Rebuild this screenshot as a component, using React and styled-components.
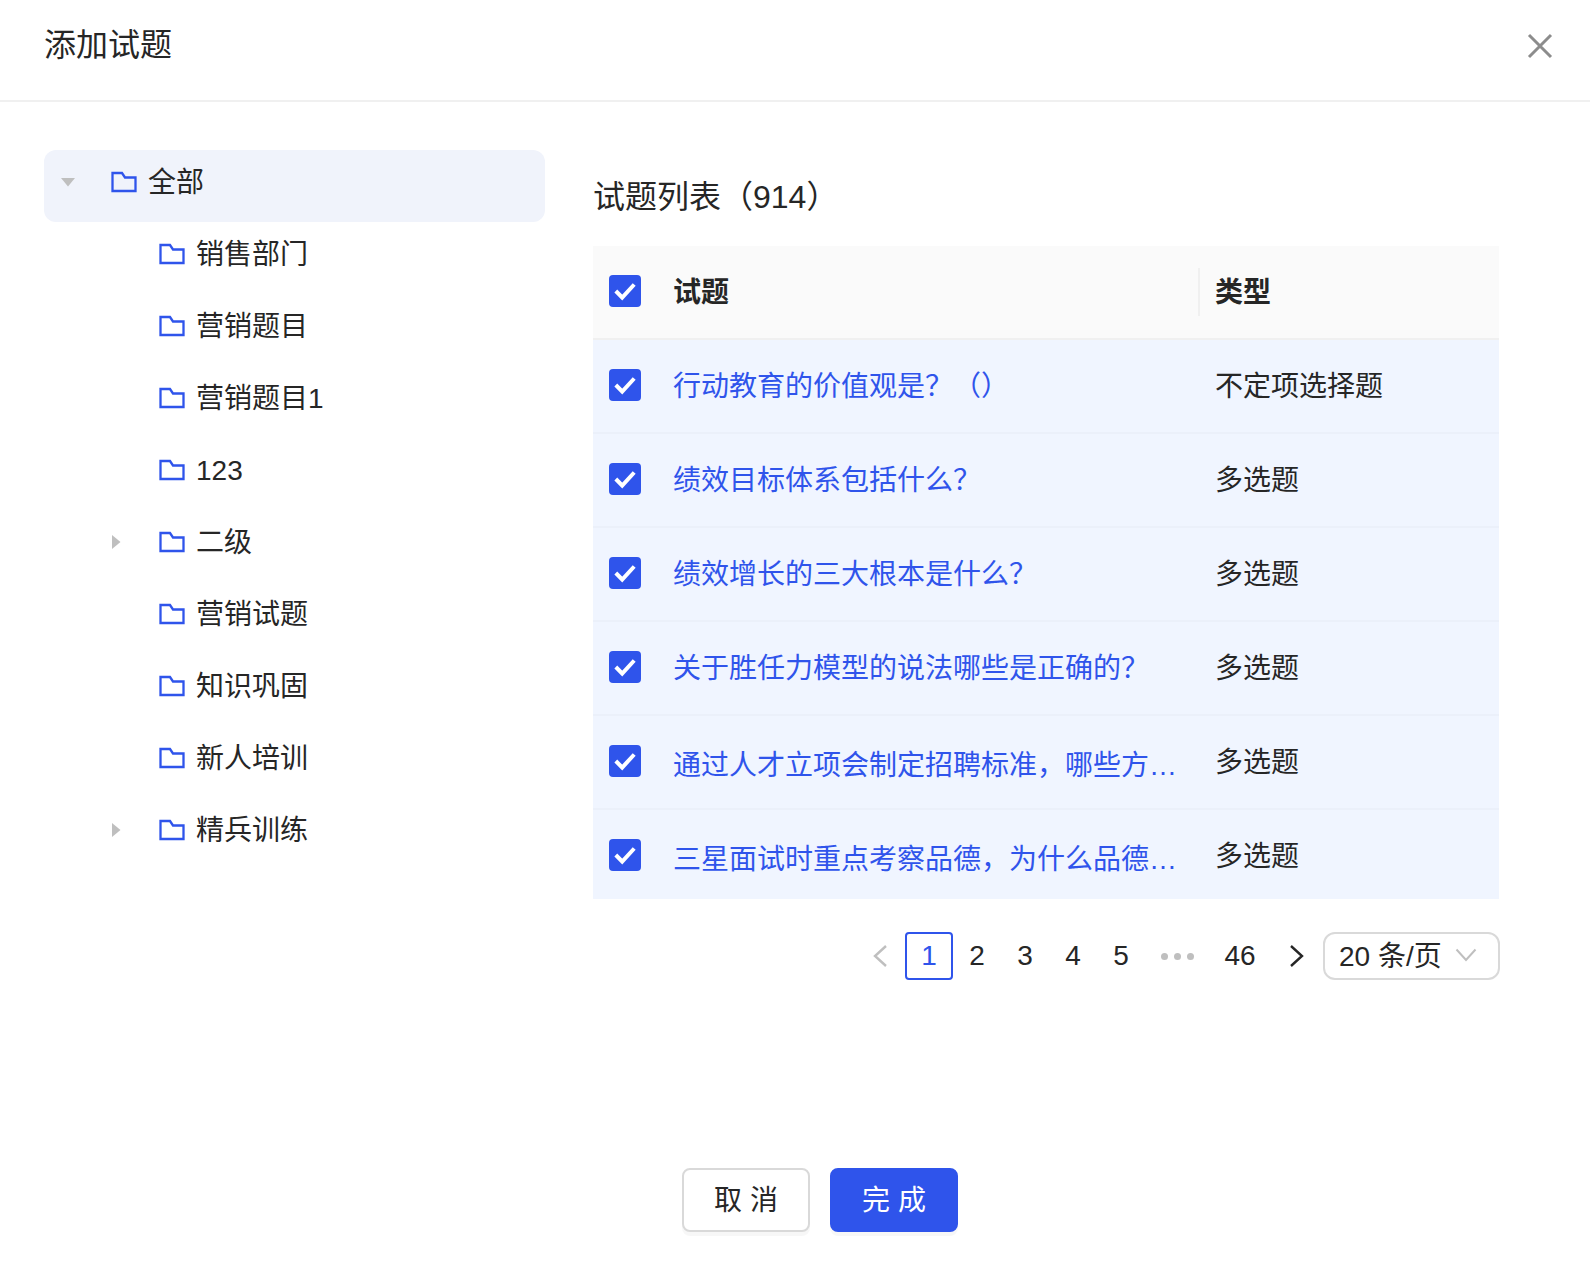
import React from "react";
import styled, { createGlobalStyle } from "styled-components";

const Global = createGlobalStyle`
  html, body { margin: 0; padding: 0; background: #fff; }
  * { box-sizing: border-box; }
  body { font-family: "Liberation Sans", "Noto Sans CJK SC", sans-serif; color: #262626; }
`;

const primary = "#2f54eb";

const Page = styled.div`
  width: 1590px;
  height: 1262px;
  display: flex;
  flex-direction: column;
  overflow: hidden;
  background: #fff;
`;
const Header = styled.header`
  height: 102px;
  flex: none;
  border-bottom: 2px solid #f0f0f0;
  padding: 0 36px 10px 44px;
  display: flex;
  align-items: center;
  justify-content: space-between;
`;
const Title = styled.h1`
  margin: 0;
  font-size: 32px;
  font-weight: 400;
  line-height: 44px;
`;
const Close = styled.button`
  border: 0;
  background: none;
  padding: 0;
  width: 28px;
  height: 28px;
  display: flex;
  color: #8c8c8c;
  margin-top: 2px;
`;
const Body = styled.main`
  flex: 1;
  display: flex;
  gap: 48px;
  padding: 48px 91px 0 44px;
`;
const Tree = styled.ul`
  list-style: none;
  margin: 0;
  padding: 0;
  width: 501px;
  flex: none;
`;
const TreeRow = styled.li`
  height: 72px;
  display: flex;
  align-items: center;
  padding-left: ${p => p.$level * 48}px;
  padding-bottom: 7px;
  border-radius: 12px;
  background: ${p => (p.$selected ? "#f0f3fb" : "transparent")};
  font-size: 28px;
  line-height: 40px;
`;
const Switcher = styled.span`
  width: 48px;
  flex: none;
  display: flex;
  justify-content: center;
  color: #bfbfbf;
  margin-bottom: 2px;
`;
const FolderWrap = styled.span`
  margin-left: 19px;
  margin-right: 11px;
  display: flex;
  color: ${primary};
  margin-bottom: 1px;
`;
const ListColumn = styled.section`
  flex: 1;
  min-width: 0;
`;
const ListTitle = styled.h2`
  margin: 25px 0 27px;
  font-size: 32px;
  font-weight: 400;
  line-height: 44px;
`;
const Table = styled.div`
  height: 653px;
  overflow: hidden;
`;
const Row = styled.div`
  display: grid;
  grid-template-columns: 64px 541px 301px;
  align-items: center;
  height: 94px;
  border-bottom: 2px solid ${p => (p.$head ? "#f0f0f0" : "#ebf0fa")};
  background: ${p => (p.$head ? "#fafafa" : "#f0f5ff")};
  font-size: 28px;
  line-height: 40px;
`;
const CheckCell = styled.div`
  padding-left: 16px;
  margin-bottom: 2px;
  display: flex;
`;
const CheckBox = styled.span`
  width: 32px;
  height: 32px;
  border-radius: 4px;
  background: ${primary};
  display: flex;
  align-items: center;
  justify-content: center;
`;
const HeadCell = styled.div`
  font-weight: 700;
  padding-left: ${p => p.$pad}px;
  padding-top: 2px;
  position: relative;
  ${p => p.$divider && `
    &::before {
      content: "";
      position: absolute;
      left: 0;
      top: -3px;
      bottom: -3px;
      width: 2px;
      background: #f0f0f0;
    }
  `}
`;
const QuestionCell = styled.a`
  color: ${primary};
  padding: 2px 16px 0;
  display: block;
  min-width: 0;
`;
const Ellipsis = styled.span`
  display: ${p => (p.$clip ? "inline-block" : "inline")};
  ${p => p.$clip && `
    max-width: 100%;
    overflow: hidden;
    white-space: nowrap;
    text-overflow: ellipsis;
    vertical-align: top;
    margin-top: 6px;
  `}
`;
const TypeCell = styled.div`
  padding: 2px 0 0 17px;
`;
const Pager = styled.nav`
  display: flex;
  justify-content: flex-end;
  align-items: center;
  margin: 33px -1px 0 0;
  font-size: 28px;
`;
const PageItem = styled.span`
  width: ${p => p.$w || 48}px;
  height: 48px;
  display: flex;
  align-items: center;
  justify-content: center;
  border-radius: 4px;
  border: 2px solid ${p => (p.$active ? primary : "transparent")};
  color: ${p => (p.$active ? primary : "inherit")};
`;
const Arrow = styled.span`
  width: 48px;
  height: 48px;
  margin-left: ${p => p.$before || 0}px;
  margin-right: ${p => p.$after || 0}px;
  display: flex;
  align-items: center;
  justify-content: center;
  color: ${p => (p.$disabled ? "#bfbfbf" : "#262626")};
`;
const Dots = styled.span`
  width: 64px;
  display: flex;
  justify-content: center;
  gap: 6px;
`;
const Dot = styled.i`
  width: 7px;
  height: 7px;
  border-radius: 50%;
  background: #bfbfbf;
`;
const SizeSelect = styled.div`
  width: 177px;
  height: 48px;
  margin-left: 2px;
  border: 2px solid #d9d9d9;
  border-radius: 12px;
  padding: 0 21px 4px 14px;
  display: flex;
  align-items: center;
  justify-content: space-between;
`;
const SelectChevron = styled.span`
  display: flex;
  color: #bfbfbf;
  margin-top: 2px;
`;
const Footer = styled.footer`
  flex: none;
  display: flex;
  justify-content: center;
  gap: 20px;
  padding: 0 0 30px 50px;
`;
const Button = styled.button`
  width: 128px;
  height: 64px;
  border-radius: 8px;
  font: inherit;
  font-size: 28px;
  padding: 0 0 4px;
  border: 2px solid ${p => (p.$primary ? primary : "#d9d9d9")};
  background: ${p => (p.$primary ? primary : "#fff")};
  color: ${p => (p.$primary ? "#fff" : "#262626")};
  box-shadow: 0 4px 0 rgba(0, 0, 0, 0.03);
`;

const Folder = () => (
  <svg width="26" height="22" viewBox="0 0 26 22" fill="none" stroke="currentColor" strokeWidth="2.3">
    <path d="M1.5 2H11L14 6.5H24.5V20H1.5Z" />
  </svg>
);
const CaretDown = () => (
  <svg width="16" height="10" viewBox="0 0 16 10"><path d="M1 1H15L8 9.5Z" fill="currentColor" /></svg>
);
const CaretRight = () => (
  <svg width="10" height="16" viewBox="0 0 10 16"><path d="M1 1V15L9.5 8Z" fill="currentColor" /></svg>
);
const Tick = () => (
  <svg width="24" height="20" viewBox="0 0 24 20" fill="none" stroke="#fff" strokeWidth="4">
    <path d="M2.8 10L9.2 16.5L21.2 3.5" />
  </svg>
);
const Check = () => (
  <CheckCell><CheckBox><Tick /></CheckBox></CheckCell>
);
const Chevron = ({ dir }) => (
  <svg width="16" height="24" viewBox="0 0 16 24" fill="none" stroke="currentColor" strokeWidth="2.4">
    <path d={dir === "left" ? "M14 2L3 12L14 22" : "M2 2L13 12L2 22"} />
  </svg>
);

const treeData = [
  { label: "全部", level: 0, caret: "down", selected: true },
  { label: "销售部门", level: 1 },
  { label: "营销题目", level: 1 },
  { label: "营销题目1", level: 1 },
  { label: "123", level: 1 },
  { label: "二级", level: 1, caret: "right" },
  { label: "营销试题", level: 1 },
  { label: "知识巩固", level: 1 },
  { label: "新人培训", level: 1 },
  { label: "精兵训练", level: 1, caret: "right" },
];

const rows = [
  { q: "行动教育的价值观是？（）", t: "不定项选择题" },
  { q: "绩效目标体系包括什么？", t: "多选题" },
  { q: "绩效增长的三大根本是什么？", t: "多选题" },
  { q: "关于胜任力模型的说法哪些是正确的？", t: "多选题" },
  { q: "通过人才立项会制定招聘标准，哪些方面需要考虑？", t: "多选题", clip: true },
  { q: "三星面试时重点考察品德，为什么品德如此重要？", t: "多选题", clip: true },
];

export default function App() {
  return (
    <Page>
      <Global />
      <Header>
        <Title>添加试题</Title>
        <Close aria-label="关闭">
          <svg width="28" height="28" viewBox="0 0 28 28" fill="none" stroke="currentColor" strokeWidth="3">
            <path d="M3 3L25 25M25 3L3 25" />
          </svg>
        </Close>
      </Header>
      <Body>
        <Tree>
          {treeData.map(n => (
            <TreeRow key={n.label} $level={n.level} $selected={n.selected}>
              <Switcher>
                {n.caret === "down" && <CaretDown />}
                {n.caret === "right" && <CaretRight />}
              </Switcher>
              <FolderWrap><Folder /></FolderWrap>
              {n.label}
            </TreeRow>
          ))}
        </Tree>
        <ListColumn>
          <ListTitle>试题列表（914）</ListTitle>
          <Table>
            <Row $head>
              <Check />
              <HeadCell $pad={16}>试题</HeadCell>
              <HeadCell $pad={17} $divider>类型</HeadCell>
            </Row>
            {rows.map(r => (
              <Row key={r.q}>
                <Check />
                <QuestionCell>
                  <Ellipsis $clip={r.clip}>{r.q}</Ellipsis>
                </QuestionCell>
                <TypeCell>{r.t}</TypeCell>
              </Row>
            ))}
          </Table>
          <Pager>
            <Arrow $disabled $after={1}><Chevron dir="left" /></Arrow>
            <PageItem $active>1</PageItem>
            <PageItem>2</PageItem>
            <PageItem>3</PageItem>
            <PageItem>4</PageItem>
            <PageItem>5</PageItem>
            <Dots><Dot /><Dot /><Dot /></Dots>
            <PageItem $w={62}>46</PageItem>
            <Arrow $before={2}><Chevron dir="right" /></Arrow>
            <SizeSelect>
              20 条/页
              <SelectChevron>
                <svg width="22" height="14" viewBox="0 0 22 14" fill="none" stroke="currentColor" strokeWidth="2">
                  <path d="M1.5 1.5L11 12L20.5 1.5" />
                </svg>
              </SelectChevron>
            </SizeSelect>
          </Pager>
        </ListColumn>
      </Body>
      <Footer>
        <Button>取 消</Button>
        <Button $primary>完 成</Button>
      </Footer>
    </Page>
  );
}
